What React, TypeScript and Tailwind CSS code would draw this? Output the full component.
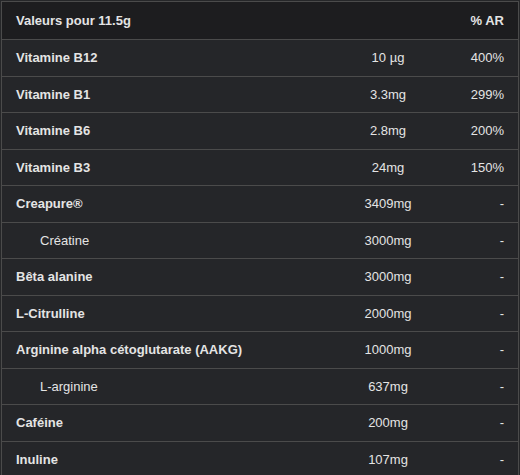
import React from 'react';

interface Row {
  name: string;
  amount: string;
  ar: string;
  sub?: boolean;
}

const rows: Row[] = [
  { name: 'Vitamine B12', amount: '10 µg', ar: '400%' },
  { name: 'Vitamine B1', amount: '3.3mg', ar: '299%' },
  { name: 'Vitamine B6', amount: '2.8mg', ar: '200%' },
  { name: 'Vitamine B3', amount: '24mg', ar: '150%' },
  { name: 'Creapure®', amount: '3409mg', ar: '-' },
  { name: 'Créatine', amount: '3000mg', ar: '-', sub: true },
  { name: 'Bêta alanine', amount: '3000mg', ar: '-' },
  { name: 'L-Citrulline', amount: '2000mg', ar: '-' },
  { name: 'Arginine alpha cétoglutarate (AAKG)', amount: '1000mg', ar: '-' },
  { name: 'L-arginine', amount: '637mg', ar: '-', sub: true },
  { name: 'Caféine', amount: '200mg', ar: '-' },
  { name: 'Inuline', amount: '107mg', ar: '-' },
];

export default function App() {
  return (
    <div className="min-h-screen bg-[#262729] p-px font-['Liberation_Sans',Arial,sans-serif] text-[13px] text-[#e4e4e4]">
      <div className="border border-[#4b4b4b] bg-[#252629]">
        {/* Header */}
        <div className="grid h-[38px] grid-cols-[1fr_120px_70px] items-center border-b border-[#4b4b4b] bg-[#1d1d1f] font-bold">
          <span className="pl-[14px]">Valeurs pour 11.5g</span>
          <span></span>
          <span className="pr-[14px] text-right">% AR</span>
        </div>

        {rows.map((row) => (
          <div
            key={row.name}
            className="grid h-[36.5px] grid-cols-[1fr_120px_70px] items-center border-b border-[#4b4b4b]"
          >
            <span className={row.sub ? 'pl-[38px]' : 'pl-[14px] font-bold'}>{row.name}</span>
            <span className="text-center">{row.amount}</span>
            <span className="pr-[14px] text-right">{row.ar}</span>
          </div>
        ))}
      </div>
    </div>
  );
}
